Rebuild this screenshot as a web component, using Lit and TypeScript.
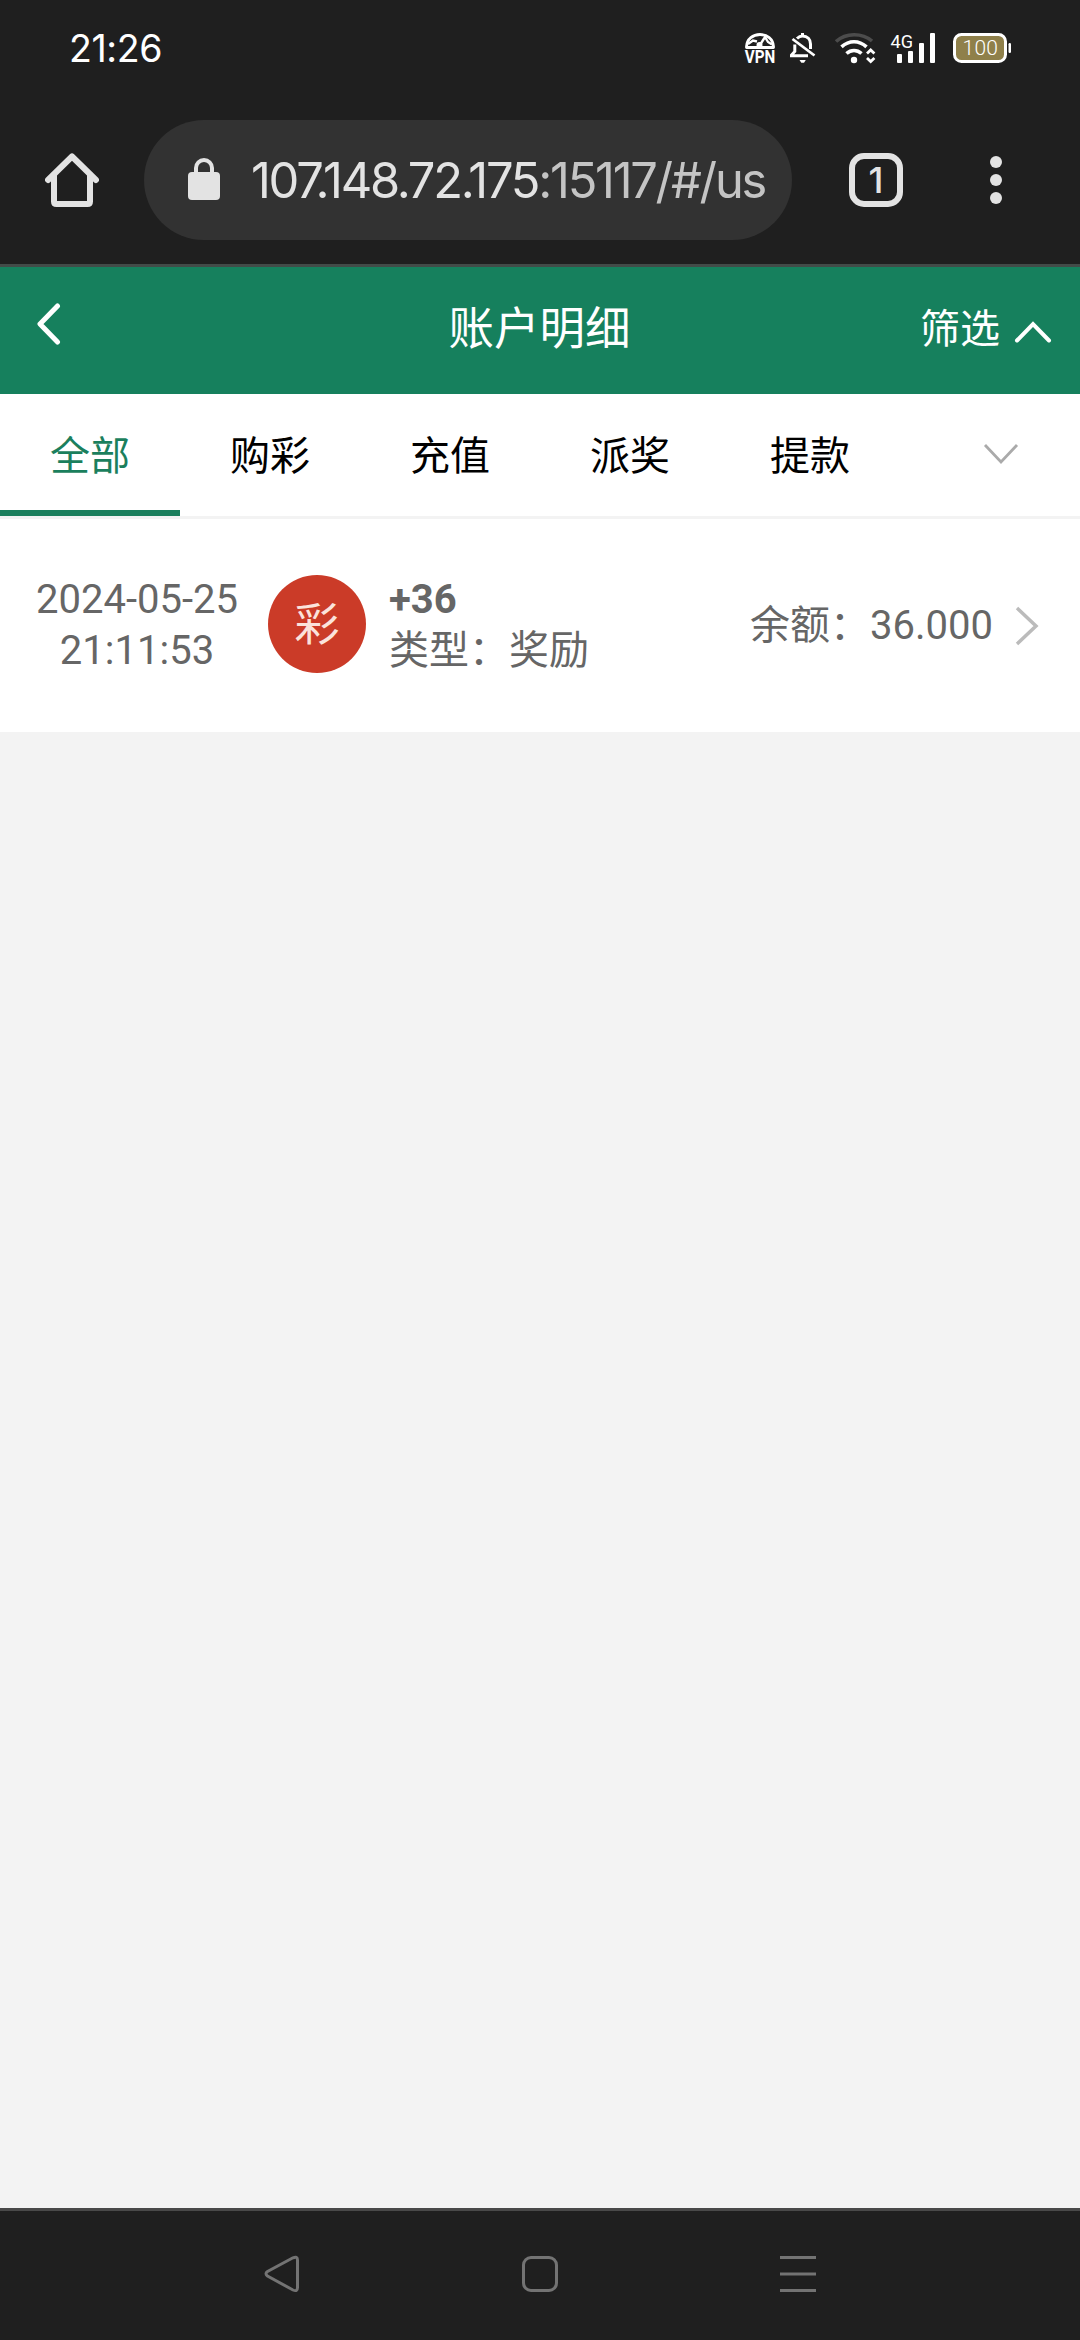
import { LitElement, html, css, svg } from "lit";
import { customElement, property, state } from "lit/decorators.js";
import { classMap } from "lit/directives/class-map.js";

@customElement("status-bar")
class StatusBar extends LitElement {
  static styles = css`
    :host { display: flex; align-items: center; height: 96px; padding: 0 68px 0 69px; box-sizing: border-box; color: #fff; }
    .time { flex: 1; font: 400 37.5px/44px Inter, Roboto, sans-serif; letter-spacing: -0.4px; padding-top: 1px; }
    .icons { display: flex; align-items: center; }
    svg { display: block; height: 32px; overflow: visible; }
    .vpn { width: 30px; margin-right: 14px; }
    .bell { width: 27px; margin-right: 19px; }
    .wifi { width: 41px; margin-right: 14px; }
    .signal { width: 46px; margin-right: 16px; }
    .battery { width: 60px; }
    .label { font-family: Roboto, sans-serif; fill: #fff; }
  `;
  render() {
    return html`
      <span class="time">21:26</span>
      <div class="icons">
        <svg class="vpn" viewBox="745 32 30 32">
          <path d="M746.5 47.500V46.500C747 39 753 34.500 760 34.500S773 39 773.500 46.500V47.500Z" fill="none" stroke="#fff" stroke-width="2.8" stroke-linejoin="round"/>
          <path d="M748 44L753 40.500 757 41.500M760 45L765 37 768 42 772 44.500" fill="none" stroke="#fff" stroke-width="2.4"/>
          <circle cx="759.500" cy="45" r="3" fill="#fff"/>
          <text class="label" x="744.8" y="63.300" font-size="18" font-weight="700" textLength="30.500" lengthAdjust="spacingAndGlyphs">VPN</text>
        </svg>
        <svg class="bell" viewBox="789 32 27 32" fill="none" stroke="#fff" stroke-width="3">
          <path d="M797 38.500C799 36.500 800.500 36 802.500 36C807.500 36 810.500 39.500 810.500 44V49"/>
          <path d="M794.800 44.500V51.500L791.500 55V55.800H808"/>
          <path d="M792.500 39L814.500 55.500" stroke-width="2.800"/>
          <path d="M802.500 33V36"/>
          <path d="M799.500 60H805.800L804 62.800H801.300Z" fill="#fff" stroke="none"/>
        </svg>
        <svg class="wifi" viewBox="835 32 41 32" fill="none" stroke="#fff" stroke-width="3.600">
          <path d="M836 41.500C846 32.500 862 32.500 872 41" stroke="#4c4c4c"/>
          <path d="M841.500 46.800C849 40 859 40 866.500 46.800"/>
          <path d="M846.500 53.500C851 49.500 857 49.500 861.500 53.500"/>
          <circle cx="854" cy="60" r="3.200" fill="#fff" stroke="none"/>
          <path d="M867 53.500L870.700 50 874.400 53.500M867 58L870.700 61.500 874.400 58" stroke-width="2.800"/>
        </svg>
        <svg class="signal" viewBox="890 32 46 32" fill="#fff">
          <text class="label" x="890.500" y="47.500" font-size="19" textLength="22.500" lengthAdjust="spacingAndGlyphs">4G</text>
          <rect x="897" y="54" width="5" height="9" rx="1"/>
          <rect x="908" y="51" width="5" height="12" rx="1"/>
          <rect x="919" y="43" width="5" height="20" rx="1"/>
          <rect x="930" y="33" width="5" height="30" rx="1"/>
        </svg>
        <svg class="battery" viewBox="952 32 60 32">
          <rect x="954.500" y="34.500" width="51" height="27" rx="7" fill="#8f804a" stroke="#fff" stroke-width="3"/>
          <rect x="1008.500" y="43" width="2.500" height="10" rx="1.200" fill="#fff"/>
          <text class="label" x="962.500" y="55.300" font-size="21" font-weight="300" textLength="35.500" lengthAdjust="spacing">100</text>
        </svg>
      </div>`;
  }
}

@customElement("browser-bar")
class BrowserBar extends LitElement {
  @property() address = "107.148.72.175";
  @property() path = ":15117/#/us";
  static styles = css`
    :host { display: flex; align-items: center; height: 168px; padding: 0 78px 0 45px; box-sizing: border-box; color: #e3e3e3; }
    svg { display: block; }
    .home { width: 54px; height: 54px; margin-right: 45px; }
    .pill { display: flex; align-items: center; width: 648px; height: 120px; border-radius: 60px; background: #323232; margin-right: 57px; }
    .lock { width: 32px; height: 42px; margin: 0 31px 2px 44px; }
    .url { font: 400 48.800px/60px Inter, Roboto, sans-serif; letter-spacing: -2.250px; white-space: nowrap; padding-top: 2px; }
    .rest { color: #c4c4c4; }
    .tabs { width: 42px; height: 42px; border: 6px solid #e3e3e3; border-radius: 15px; display: flex; align-items: center; justify-content: center; font: 500 36px/42px Inter, Roboto, sans-serif; margin-right: 87px; }
    .more { width: 12px; height: 48px; }
  `;
  render() {
    return html`
      <svg class="home" viewBox="45 153 54 54" fill="none" stroke="#e3e3e3" stroke-width="6" stroke-linecap="round" stroke-linejoin="round">
        <path d="M48 180L72 156.500 96 180"/><path d="M54 175V201.500Q54 204 56.500 204H87.500Q90 204 90 201.500V175"/>
      </svg>
      <div class="pill">
        <svg class="lock" viewBox="188 158 32 42">
          <rect x="188" y="172" width="32" height="28" rx="4" fill="#e3e3e3"/>
          <path d="M196 174V168A8 8 0 0 1 212 168V174" fill="none" stroke="#e3e3e3" stroke-width="4"/>
        </svg>
        <span class="url">${this.address}<span class="rest">${this.path}</span></span>
      </div>
      <div class="tabs">1</div>
      <svg class="more" viewBox="0 0 12 48" fill="#e3e3e3">${[6, 24, 42].map((y) => svg`<circle cx="6" cy=${y} r="6"/>`)}</svg>`;
  }
}

@customElement("app-root")
class AppRoot extends LitElement {
  @state() private active = 0;
  private tabs = ["全部", "购彩", "充值", "派奖", "提款"];
  static styles = css`
    :host { display: flex; flex-direction: column; width: 1080px; height: 2340px; background: #f3f3f3; overflow: hidden; font-family: Roboto, "Noto Sans CJK SC", sans-serif; font-size: 40px; }
    svg { display: block; fill: none; }
    .chrome { height: 264px; background: #1f1f1f; border-bottom: 3px solid #424b48; }
    .header { display: grid; grid-template-columns: 1fr auto 1fr; align-items: center; height: 127px; padding: 0 28px 0 37px; background: #16805d; color: #fff; }
    .back { width: 24px; height: 42px; margin-bottom: 13px; }
    .title { font-size: 45.500px; line-height: 60px; margin: 0 5px 2px -5px; }
    .filter { display: flex; align-items: center; justify-content: flex-end; line-height: 56px; padding-bottom: 2px; }
    .up { width: 38px; height: 24px; margin: 4px 0 0 14px; }
    .tabs { display: flex; height: 122px; border-bottom: 3px solid #f3f3f3; background: #fff; color: #000; }
    .tab { width: 180px; display: flex; align-items: center; justify-content: center; box-sizing: border-box; border-bottom: 6px solid transparent; padding-top: 1px; }
    .on { color: #1b7f5d; border-color: #1b7f5d; }
    .arrow { padding: 4px 0 0 22px; }
    .down { width: 36px; height: 22px; }
    .row { display: flex; align-items: center; height: 213px; padding: 0 41px 0 35px; box-sizing: border-box; background: #fff; color: #666; line-height: 51px; }
    .date { width: 204px; text-align: center; padding-bottom: 1px; }
    .badge { width: 98px; height: 98px; border-radius: 50%; background: #cb3b28; color: #fbe3dc; font-size: 45px; line-height: 101px; text-align: center; margin: 0 23px 3px 29px; }
    .info { flex: 1; padding-bottom: 1px; }
    .line { height: 51px; white-space: nowrap; }
    .amount { font-weight: 700; }
    .next { width: 24px; height: 40px; margin: 0 0 0 22px; }
    .body { flex: 1; }
    .nav { display: flex; align-items: center; justify-content: space-between; padding: 0 263px 4px; box-sizing: border-box; border-top: 3px solid #494949; background: #1f1f1f; flex: 0 0 132px; }
    .key { width: 38px; height: 38px; stroke: #737373; stroke-width: 3; }
  `;
  render() {
    return html`
      <div class="chrome"><status-bar></status-bar><browser-bar></browser-bar></div>
      <div class="header">
        <svg class="back" viewBox="0 0 24 42"><path d="M20.500 3L3 21 20.500 39" stroke="#fff" stroke-width="5" stroke-linecap="round" stroke-linejoin="round"/></svg>
        <span class="title">账户明细</span>
        <div class="filter"><span>筛选</span><svg class="up" viewBox="0 0 38 24"><path d="M3 20.500L19 4 35 20.500" stroke="#fff" stroke-width="4" stroke-linecap="round"/></svg></div>
      </div>
      <div class="tabs">
        ${this.tabs.map((t, i) => html`<div class=${classMap({ tab: true, on: i === this.active })} @click=${() => (this.active = i)}>${t}</div>`)}
        <div class="tab arrow"><svg class="down" viewBox="0 0 36 22"><path d="M2 2L18 19 34 2" stroke="#aaa" stroke-width="2.800"/></svg></div>
      </div>
      <div class="row">
        <div class="date"><div class="line">2024-05-25</div><div class="line">21:11:53</div></div>
        <div class="badge">彩</div>
        <div class="info"><div class="line amount">+36</div><div class="line">类型：奖励</div></div>
        <div class="balance">余额：36.000</div>
        <svg class="next" viewBox="0 0 24 40"><path d="M2 2L21 20 2 38" stroke="#bbb" stroke-width="3.500"/></svg>
      </div>
      <div class="body"></div>
      <div class="nav">
        <svg class="key" viewBox="263 2255 38 38"><path d="M293 2257.800L267.500 2271.500Q264.500 2273.500 267.500 2276L293 2290Q297.500 2292 297.500 2287.500V2260Q297.500 2255.800 293 2257.800Z"/></svg>
        <svg class="key" viewBox="521 2255 38 38"><rect x="523.500" y="2257.500" width="33" height="33" rx="7.500"/></svg>
        <svg class="key" viewBox="779 2255 38 38"><path d="M780 2257.500H816M780 2274H816M780 2290.500H816"/></svg>
      </div>`;
  }
}
